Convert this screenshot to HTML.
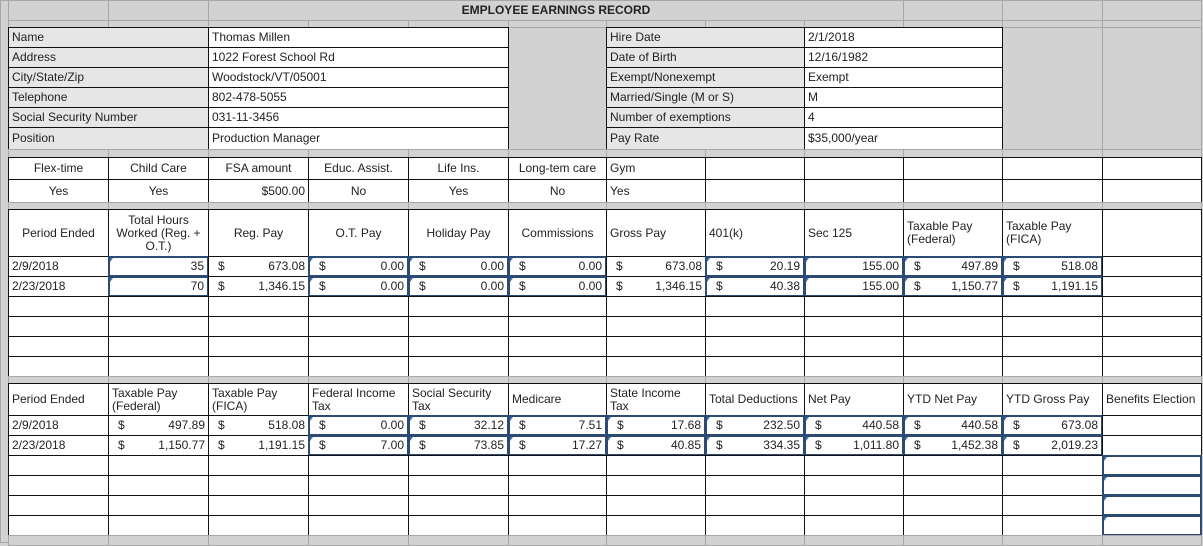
<!DOCTYPE html>
<html><head><meta charset="utf-8"><style>
body{margin:0;width:1203px;height:542px;background:#d2d2d2;position:relative;overflow:hidden;font-family:"Liberation Sans",Arial,sans-serif;font-size:12px;color:#222}
.c{position:absolute;box-sizing:border-box;border:1px solid #111;background:#fff;padding:0 3px;white-space:nowrap;display:flex;align-items:center;line-height:13px}
.g{background:#d2d2d2;border-color:#a8a8a8}
.l{background:#e6e6e6}
.ct{justify-content:center;text-align:center}
.r{justify-content:flex-end}
.m{justify-content:space-between;padding:0 3px 0 9px}
.b{border:2px solid #2c4a72}
.b::before{content:"";position:absolute;left:0;top:0;border-top:4px solid #3d6fb0;border-right:3px solid transparent}
.t{font-weight:bold;justify-content:center;font-size:12px}
</style></head><body>
<div id="p"></div>
<script>
const X=[8,108,208,308,408,508,606,705,804,903,1002,1102,1201];
let h='';
function c(x1,x2,y1,y2,cls,txt){h+=`<div class="c ${cls}" style="left:${x1}px;top:${y1}px;width:${x2-x1+1}px;height:${y2-y1+1}px">${txt||''}</div>`;}
function m(a,b){return `<span>$</span><span>${b}</span>`}
c(0,8,0,542,'g');
c(8,108,0,20,'g');c(108,208,0,20,'g');c(208,903,0,20,'g t','EMPLOYEE EARNINGS RECORD');c(903,1002,0,20,'g');c(1002,1102,0,20,'g');c(1102,1201,0,20,'g');
for(let i=0;i<12;i++)c(X[i],X[i+1],20,27,'g');
const L=['Name','Address','City/State/Zip','Telephone','Social Security Number','Position'];
const V=['Thomas Millen','1022 Forest School Rd','Woodstock/VT/05001','802-478-5055','031-11-3456','Production Manager'];
const L2=['Hire Date','Date of Birth','Exempt/Nonexempt','Married/Single (M or S)','Number of exemptions','Pay Rate'];
const V2=['2/1/2018','12/16/1982','Exempt','M','4','$35,000/year'];
c(508,606,27,149,'g');c(1002,1102,27,149,'g');c(1102,1201,27,149,'g');
for(let i=0;i<6;i++){let y=27+i*20,y2=i==5?149:y+20;
c(8,208,y,y2,'l',L[i]);c(208,508,y,y2,'',V[i]);c(606,804,y,y2,'l',L2[i]);c(804,1002,y,y2,'',V2[i]);}
for(let i=0;i<12;i++)c(X[i],X[i+1],149,157,'g');
const F=['Flex-time','Child Care','FSA amount','Educ. Assist.','Life Ins.','Long-tem care','Gym','','','','',''];
const F2=['Yes','Yes','<span style="margin-left:auto">$500.00</span>','No','Yes','No','Yes','','','','',''];
for(let i=0;i<12;i++){c(X[i],X[i+1],157,179,i<6?'ct':'',F[i]);c(X[i],X[i+1],179,202,i<6&&i!=2?'ct':'',F2[i]);}
for(let i=0;i<12;i++)c(X[i],X[i+1],202,209,'g');
const H=['Period Ended','Total Hours<br>Worked (Reg. +<br>O.T.)','Reg. Pay','O.T. Pay','Holiday Pay','Commissions','Gross Pay','401(k)','Sec 125','Taxable Pay<br>(Federal)','Taxable Pay<br>(FICA)',''];
for(let i=0;i<12;i++)c(X[i],X[i+1],209,256,i<6?'ct':'',H[i]);
const D=[['2/9/2018','35','673.08','0.00','0.00','0.00','673.08','20.19','155.00','497.89','518.08'],['2/23/2018','70','1,346.15','0.00','0.00','0.00','1,346.15','40.38','155.00','1,150.77','1,191.15']];
D.forEach((r,j)=>{let y=256+j*20;c(8,108,y,y+20,'',r[0]);
for(let i=1;i<11;i++){let cl=(i==1||i==8)?'r':'m';if(i!=2&&i!=6)cl+=' b';c(X[i],X[i+1],y,y+20,cl,(i==1||i==8)?r[i]:m(0,r[i]));}
c(1102,1201,y,y+20,'');});
for(let k=0;k<4;k++)for(let i=0;i<12;i++)c(X[i],X[i+1],296+k*20,316+k*20,'');
for(let i=0;i<12;i++)c(X[i],X[i+1],376,383,'g');
const H2=['Period Ended','Taxable Pay<br>(Federal)','Taxable Pay<br>(FICA)','Federal Income<br>Tax','Social Security<br>Tax','Medicare','State Income<br>Tax','Total Deductions','Net Pay','YTD Net Pay','YTD Gross Pay','Benefits Election'];
for(let i=0;i<12;i++)c(X[i],X[i+1],383,415,'',H2[i]);
const E=[['2/9/2018','497.89','518.08','0.00','32.12','7.51','17.68','232.50','440.58','440.58','673.08'],['2/23/2018','1,150.77','1,191.15','7.00','73.85','17.27','40.85','334.35','1,011.80','1,452.38','2,019.23']];
E.forEach((r,j)=>{let y=415+j*20;c(8,108,y,y+20,'',r[0]);
for(let i=1;i<11;i++)c(X[i],X[i+1],y,y+20,'m'+(i>2?' b':''),m(0,r[i]));
c(1102,1201,y,y+20,'');});
for(let k=0;k<4;k++)for(let i=0;i<12;i++)c(X[i],X[i+1],455+k*20,475+k*20,i==11?'b':'');
for(let i=0;i<12;i++)c(X[i],X[i+1],535,545,'g');
document.getElementById('p').innerHTML=h;
</script>
</body></html>
